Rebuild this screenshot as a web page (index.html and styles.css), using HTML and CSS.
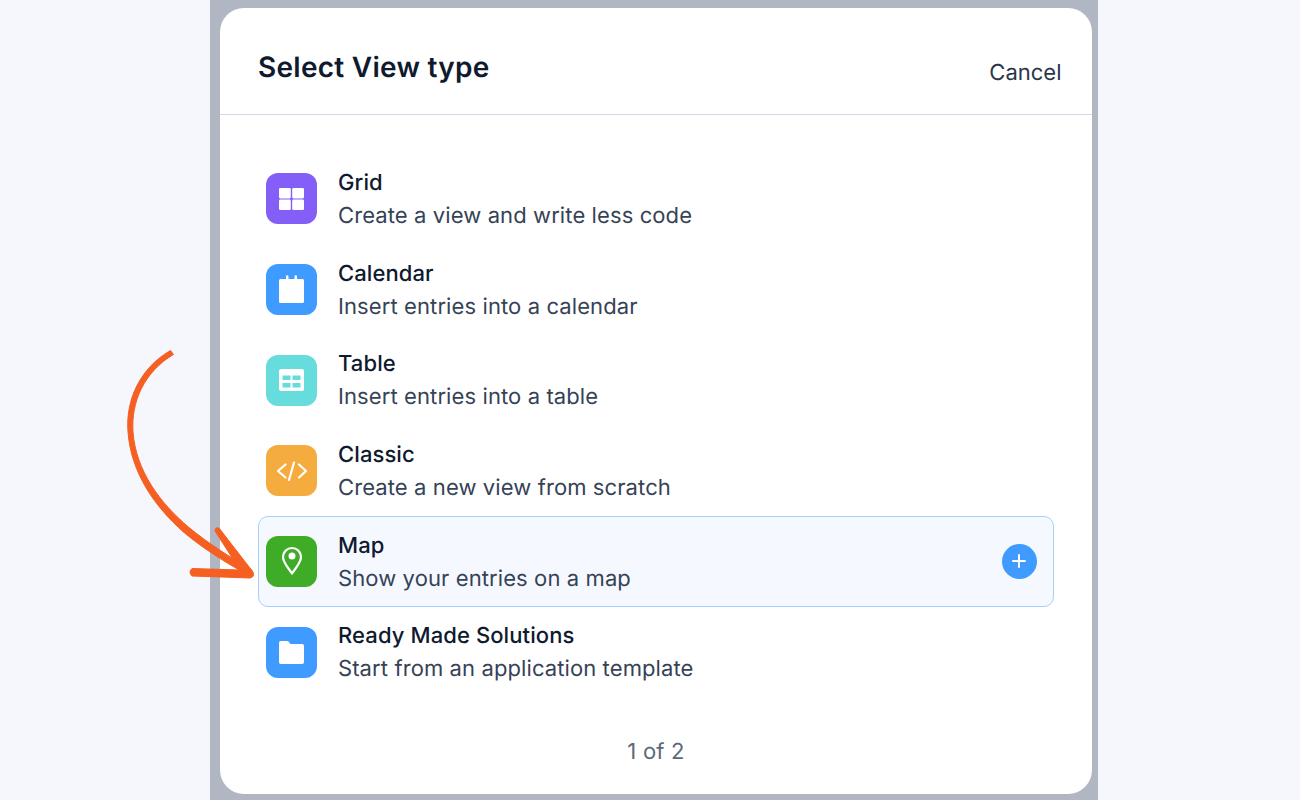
FILE: index.html
```html
<!DOCTYPE html>
<html lang="en">
<head>
<meta charset="utf-8">
<title>Select View type</title>
<link rel="stylesheet" href="styles.css">
</head>
<body>
<div class="backdrop">
  <div class="modal">
    <header class="modal-head">
      <h1 class="modal-title">Select View type</h1>
      <span class="cancel">Cancel</span>
    </header>
    <ul class="list">
      <li class="row">
        <span class="icon purple"><svg viewBox="0 0 25 22" width="25" height="22"><rect width="11.800" height="10.400" rx="1.300"/><rect x="13.200" width="11.800" height="10.400" rx="1.300"/><rect y="11.600" width="11.800" height="10.400" rx="1.300"/><rect x="13.200" y="11.600" width="11.800" height="10.400" rx="1.300"/></svg></span>
        <div class="text"><div class="name">Grid</div><div class="desc">Create a view and write less code</div></div>
      </li>
      <li class="row">
        <span class="icon blue"><svg viewBox="0 0 25 28" width="25" height="28"><path d="M0 5.500a1.500 1.500 0 0 1 1.500-1.500H7V1.500a1.250 1.250 0 0 1 2.500 0V4h6V1.500a1.250 1.250 0 0 1 2.500 0V4h5.500A1.500 1.500 0 0 1 25 5.500V26.500a1.500 1.500 0 0 1-1.500 1.500H1.500A1.500 1.500 0 0 1 0 26.500z"/></svg></span>
        <div class="text"><div class="name">Calendar</div><div class="desc">Insert entries into a calendar</div></div>
      </li>
      <li class="row">
        <span class="icon teal"><svg viewBox="0 0 25 22" width="25" height="22"><path fill-rule="evenodd" d="M2 0h21a2 2 0 0 1 2 2v18a2 2 0 0 1-2 2H2a2 2 0 0 1-2-2V2a2 2 0 0 1 2-2zM3.500 6.500v4.500h8V6.500zM13.500 6.500v4.500h8V6.500zM3.500 14v4.500h8V14zM13.500 14v4.500h8V14z"/></svg></span>
        <div class="text"><div class="name">Table</div><div class="desc">Insert entries into a table</div></div>
      </li>
      <li class="row">
        <span class="icon orange"><svg class="line" viewBox="0 0 30 24" width="30" height="24"><path d="M8.500 5.500 1 12 8.500 18.500M22 5.500 29 12 22 18.500M17 3.500 12 21"/></svg></span>
        <div class="text"><div class="name">Classic</div><div class="desc">Create a new view from scratch</div></div>
      </li>
      <li class="row active">
        <span class="icon green"><svg class="pin" viewBox="0 0 22 30" width="22" height="30"><path class="pin-line" d="M11 27.500C7 21.500 2 16.500 2 11a9 9 0 0 1 18 0c0 5.500-5 10.500-9 16.500z"/><circle cx="11" cy="10" r="3.500"/></svg></span>
        <div class="text"><div class="name">Map</div><div class="desc">Show your entries on a map</div></div>
        <span class="add"><svg class="line plus" viewBox="0 0 14 14" width="14" height="14"><path d="M7 1v12M1 7h12"/></svg></span>
      </li>
      <li class="row">
        <span class="icon blue"><svg viewBox="0 0 25 23" width="25" height="23"><path d="M0 1.800A1.800 1.800 0 0 1 1.800 0h6.400a2 2 0 0 1 1.500.7L11.500 3h11.700A1.800 1.800 0 0 1 25 4.800v16.400a1.800 1.800 0 0 1-1.800 1.800H1.800A1.800 1.800 0 0 1 0 21.200z"/></svg></span>
        <div class="text"><div class="name">Ready Made Solutions</div><div class="desc">Start from an application template</div></div>
      </li>
    </ul>
    <div class="pager">1 of 2</div>
  </div>
</div>
<svg class="arrow" viewBox="0 0 300 300" width="300" height="300" aria-hidden="true">
  <path d="M50.500 10.500C20 28 5.500 60 8 92C11 133 35 167 64 192.500C85 210 108 224 130 236L132 230C110 217 89 204 69 187.500C40 163 16 131 13 92C11 62 24 32 53.500 14.500Z"/>
  <path d="M72 228.500L120 230L95 191Q95 187 99 188L133 232Q135 237 130 238L72 236Q68 232 72 228.500Z"/>
</svg>
</body>
</html>
```
FILE: styles.css
```css
* { box-sizing: border-box; }
html, body { margin: 0; height: 100%; }
body {
  background: #f5f7fd;
  font-family: Inter, "Liberation Sans", sans-serif;
  text-rendering: geometricPrecision;
  overflow: hidden;
  position: relative;
}
.backdrop {
  width: 888px;
  height: 800px;
  margin-left: 210px;
  background: #b1b6c3;
  padding: 8px 6px 6px 10px;
}
.modal {
  height: 786px;
  background: #fff;
  border-radius: 24px;
  display: flex;
  flex-direction: column;
}
.modal-head {
  height: 107px;
  flex: none;
  border-bottom: 1px solid #d5d8e6;
  padding: 40px 30.500px 0 38px;
  display: flex;
  justify-content: space-between;
  align-items: flex-start;
}
.modal-title {
  margin: 0;
  font-size: 28px;
  line-height: 38px;
  font-weight: 600;
  letter-spacing: 0.270px;
  color: #0f1a2e;
}
.cancel {
  font-size: 22px;
  line-height: 30px;
  margin-top: 10px;
  color: #2a3549;
}
.list {
  list-style: none;
  margin: 38.300px 38px 0;
  padding: 0;
  display: grid;
  grid-auto-rows: 90.700px;
}
.row {
  display: flex;
  align-items: center;
  border: 1px solid transparent;
  border-radius: 10px;
  padding: 0 16px 0 7px;
  gap: 21px;
}
.row.active {
  background: #f5f9ff;
  border-color: #a5d0fc;
}
.icon {
  width: 51px;
  height: 51px;
  flex: none;
  border-radius: 12px;
  display: flex;
  align-items: center;
  justify-content: center;
}
.icon svg { fill: #fff; display: block; }
.purple { background: #845ff7; }
.blue { background: #3f9bff; }
.teal { background: #67dcdc; }
.orange { background: #f5ac3e; }
.green { background: #3eac27; }
.icon .line { fill: none; }
.line { fill: none; stroke: #fff; stroke-width: 2.200; stroke-linecap: round; stroke-linejoin: round; }
.plus { stroke-width: 2; margin: -1px 0 0 -1px; }
.pin-line { fill: none; stroke: #fff; stroke-width: 2.200; stroke-linejoin: round; }
.text { flex: 1; min-width: 0; padding-top: 1.600px; }
.name {
  font-size: 22px;
  line-height: 34px;
  font-weight: 500;
  letter-spacing: 0.100px;
  color: #0f1a2e;
}
.desc {
  font-size: 22px;
  line-height: 33px;
  letter-spacing: 0.100px;
  color: #364256;
}
.add {
  width: 35px;
  height: 35px;
  flex: none;
  border-radius: 50%;
  background: #3f9bff;
  display: flex;
  align-items: center;
  justify-content: center;
}
.pager {
  margin-top: 39.600px;
  text-align: center;
  font-size: 22px;
  line-height: 30px;
  letter-spacing: 0.200px;
  color: #5d6779;
}
.arrow {
  position: absolute;
  left: 120px;
  top: 340px;
  fill: #f55f22;
  stroke: #f55f22;
  stroke-width: 1;
  stroke-linejoin: round;
}
```
